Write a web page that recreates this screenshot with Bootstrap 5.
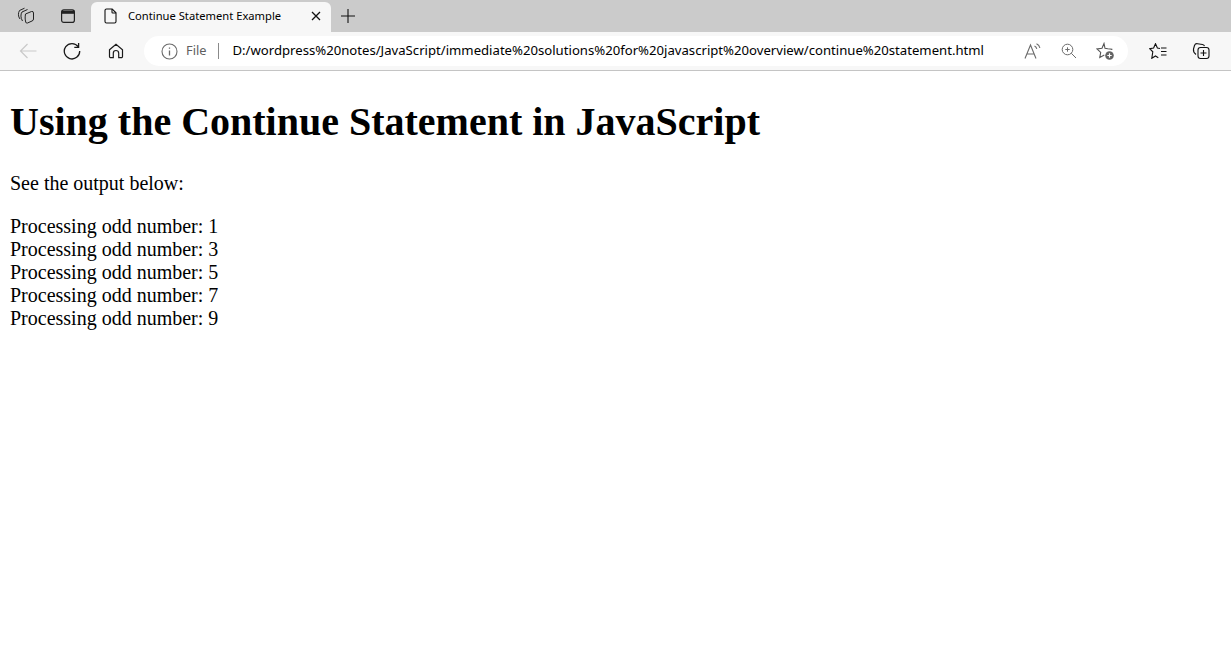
<!DOCTYPE html>
<html lang="en">
<head>
<meta charset="utf-8">
<title>Continue Statement Example</title>
<link href="https://cdn.jsdelivr.net/npm/bootstrap@5.3.0/dist/css/bootstrap.min.css" rel="stylesheet">
<script src="https://cdn.jsdelivr.net/npm/bootstrap@5.3.0/dist/js/bootstrap.bundle.min.js"></script>
<style>
html,body{height:100%;background:#fff;overflow:hidden}
.chrome-ui{font-family:"Noto Sans","Open Sans",sans-serif;color:#000}
.strip{height:32px;background:#cbcbcb}
.strip-btn{width:42px;height:31px;flex:none}
.strip-lead{width:91px;padding-left:5px;flex:none}
.page-tab{width:240px;height:30px;margin-top:2px;background:#f7f7f7;border-radius:6px 6px 0 0;padding:0 10px 2px 13px;flex:none}
.tab-title{font-size:11.2px;margin-left:10px;white-space:nowrap;width:170px}
.new-tab{width:34px;height:31px;flex:none}
.bar{height:39px;background:#f7f7f7;border-bottom:1px solid #c4c4c4;padding-left:6px}
.nav-btn{width:44px;height:38px;flex:none}
.omni{width:984px;height:30px;margin-left:6px;background:#fff;border-radius:15px;padding-left:17px;flex:none}
.file-lbl{font-size:12.8px;color:#5f5f5f;margin-left:8px}
.omni-sep{width:1px;height:16px;background:#8a8a8a;margin-left:12px;margin-right:13px}
.url-text{font-size:13.15px;white-space:nowrap;width:783px;overflow:hidden;flex:none}
.omni-ico{width:36px;height:30px;flex:none}
.tail-btn{width:44px;height:38px;flex:none}
.tail-end{width:42px}
.doc{padding:9px 10px;font-family:"Liberation Serif","Times New Roman",serif;color:#000;font-size:20px;line-height:23px}
.doc h1{font-family:inherit;font-weight:700;font-size:40px;line-height:46px;margin:19px 0 27px}
.doc p{margin:0 0 20px}
svg{display:block;fill:none}
</style>
</head>
<body>
<div class="chrome-ui">
  <div class="strip d-flex">
    <div class="strip-lead d-flex">
      <div class="strip-btn d-flex align-items-center justify-content-center">
        <svg width="18" height="18" viewBox="0 0 18 18" stroke="#222" stroke-width="1"><path d="M3 12C1 9.500 1 6 2.500 3.500L7.500 1.200"/><path d="M5.500 14C3.500 11 3.500 7 5 5L10.500 2.500"/><path d="M8.500 7 14.500 4.500Q16.500 4 16.500 6V12Q16.500 13.500 15 14L10.500 16Q9 16.500 8.700 15C8 12 8 10 8.500 7Z"/></svg>
      </div>
      <div class="strip-btn d-flex align-items-center justify-content-center">
        <svg width="16" height="16" viewBox="0 0 16 16" stroke="#222" stroke-width="1.200"><rect x="1.600" y="1.800" width="12.800" height="12.600" rx="2.200"/><path d="M1.600 4.300h12.800" stroke-width="3"/></svg>
      </div>
    </div>
    <div class="page-tab d-flex align-items-center">
      <svg width="14" height="16" viewBox="0 0 14 16" stroke="#111" stroke-width="1.100"><path d="M2.500 1h5.700L12 4.800V13.500a1.500 1.500 0 0 1-1.500 1.500h-8A1.500 1.500 0 0 1 1 13.500v-11A1.500 1.500 0 0 1 2.500 1Z"/><path d="M8 1v3.200a.8.8 0 0 0 .8.8H12"/></svg>
      <span class="tab-title">Continue Statement Example</span>
      <svg class="ms-auto" width="10" height="10" viewBox="0 0 10 10" stroke="#111" stroke-width="1.300"><path d="M1 1l8 8M9 1 1 9"/></svg>
    </div>
    <div class="new-tab d-flex align-items-center justify-content-center">
      <svg width="16" height="16" viewBox="0 0 16 16" stroke="#111" stroke-width="1.100"><path d="M8 1v14M1 8h14"/></svg>
    </div>
  </div>
  <div class="bar d-flex align-items-center">
    <div class="nav-btn d-flex align-items-center justify-content-center">
      <svg width="18" height="16" viewBox="0 0 18 16" stroke="#c9c9c9" stroke-width="1.200"><path d="M1.500 8h16M8.500 1 1.500 8l7 7"/></svg>
    </div>
    <div class="nav-btn d-flex align-items-center justify-content-center">
      <svg width="18" height="18" viewBox="0 0 18 18" stroke="#1a1a1a" stroke-width="1.300"><path d="M15.300 4.800A7.700 7.700 0 1 0 16.700 9"/><path d="M15.600 1v4.300h-4.300"/></svg>
    </div>
    <div class="nav-btn d-flex align-items-center justify-content-center">
      <svg width="16" height="16" viewBox="0 0 16 16" stroke="#1a1a1a" stroke-width="1.200"><path d="M1.500 6.800 8 1.200l6.500 5.600v6.700a1.200 1.200 0 0 1-1.200 1.200h-2.600V10.200a2.700 2.700 0 0 0-5.400 0v4.500H2.700a1.200 1.200 0 0 1-1.200-1.200Z"/></svg>
    </div>
    <div class="omni d-flex align-items-center">
      <svg width="17" height="17" viewBox="0 0 17 17" stroke="#6b6b6b" stroke-width="1.100"><circle cx="8.500" cy="8.500" r="7.500"/><path d="M8.500 7.500v5M8.500 4.500v1.300" stroke-width="1.300"/></svg>
      <span class="file-lbl">File</span>
      <span class="omni-sep"></span>
      <span class="url-text">D:/wordpress%20notes/JavaScript/immediate%20solutions%20for%20javascript%20overview/continue%20statement.html</span>
      <div class="omni-ico d-flex align-items-center justify-content-center">
        <svg width="18" height="16" viewBox="0 0 18 16" stroke="#6b6b6b" stroke-width="1.100"><path d="M1 15.500 6.500 2l5.500 13.500M2.800 11h7.400"/><path d="M10.500 3c1.200.5 2 1.500 2.300 2.800M12.500 .8c1.800.8 3 2.300 3.400 4.200"/></svg>
      </div>
      <div class="omni-ico d-flex align-items-center justify-content-center">
        <svg width="16" height="16" viewBox="0 0 16 16" stroke="#6b6b6b" stroke-width="1"><circle cx="6.500" cy="6.500" r="5.300"/><path d="M10.300 10.300 15 15M6.500 4.300v4.400M4.300 6.500h4.400"/></svg>
      </div>
      <div class="omni-ico d-flex align-items-center justify-content-center">
        <svg width="19" height="19" viewBox="0 0 19 19" stroke="#555" stroke-width="1.100"><path d="M15.800 8 15.800 7.300l-4-.5L9 6.300 8 1.500 6 6.200l-5 .7 3.700 3.500-.9 5.100 4.500-2.400"/><circle cx="13.500" cy="13.500" r="4.300" fill="#636363" stroke="none"/><path d="M13.500 11.300v4.400M11.300 13.500h4.400" stroke="#fff" stroke-width="1.200"/></svg>
      </div>
    </div>
    <div class="tail-btn d-flex align-items-center justify-content-center ms-2">
      <svg width="18" height="16" viewBox="0 0 18 16" stroke="#111" stroke-width="1.100"><path d="M11 5.500 8.400 5 6.500 .7 4.600 5 .7 5.700 3.800 8.800 2.800 15.300 6.500 13 9.300 14.700"/><path d="M12 5h5.500M12 8.500h5.500M12 12h5.500"/></svg>
    </div>
    <div class="tail-btn tail-end d-flex align-items-center justify-content-center">
      <svg width="18" height="18" viewBox="0 0 18 18" stroke="#111" stroke-width="1.100"><path d="M4 12.500C2.200 11 1 9.500 1.500 7l1-3.500C3 2 4 1.500 5.500 1.700l5 .8c1.200.2 1.800.8 2 1.700"/><rect x="6" y="5.500" width="11" height="11" rx="2.500"/><path d="M11.500 8v6M8.500 11h6"/></svg>
    </div>
  </div>
</div>
<main class="doc">
  <h1>Using the Continue Statement in JavaScript</h1>
  <p>See the output below:</p>
  <div>
    Processing odd number: 1<br>
    Processing odd number: 3<br>
    Processing odd number: 5<br>
    Processing odd number: 7<br>
    Processing odd number: 9<br>
  </div>
</main>
</body>
</html>
